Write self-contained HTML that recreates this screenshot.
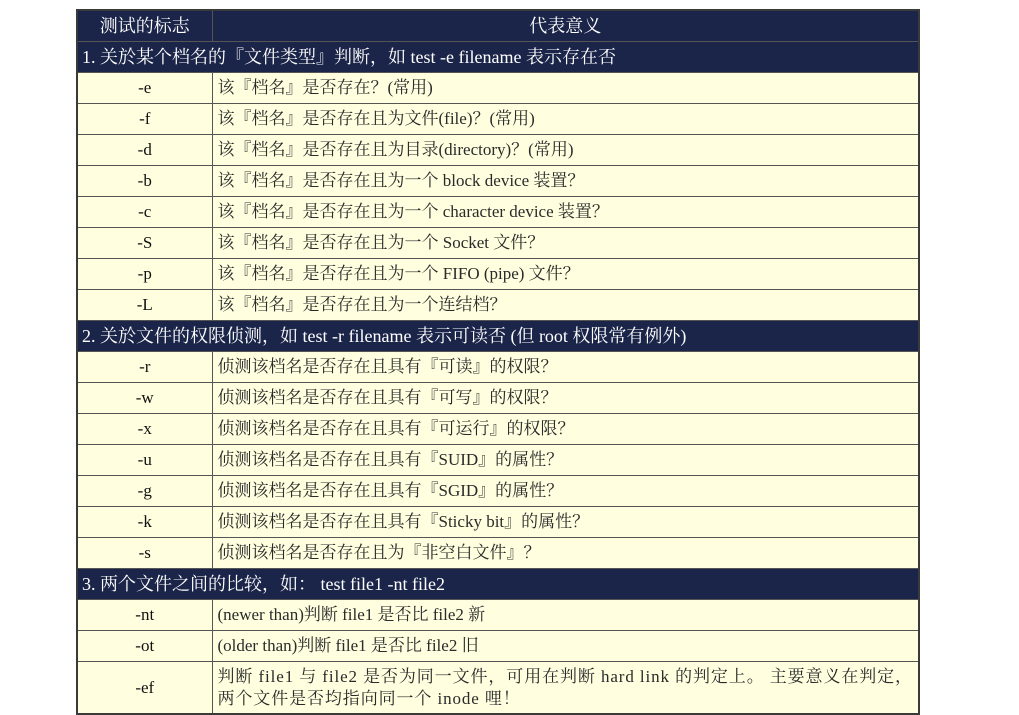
<!DOCTYPE html>
<html><head><meta charset="utf-8"><style>
body{margin:0;background:#fff;width:1019px;height:714px;overflow:hidden;font-family:"Liberation Serif","Noto Serif CJK SC",serif;font-size:17px;}
table{position:absolute;left:76px;top:9px;width:844px;border-collapse:collapse;table-layout:fixed;border:2px solid #3a3a3a;}
td{border:1px solid #555;padding:0 5px;height:30px;background:#fffedf;color:#2a2a2a;white-space:nowrap;line-height:22px;overflow:hidden;}
td.k{text-align:center;color:#111;}
tr.h td{background:#1b2549;color:#fff;}
tr.s td{background:#1b2549;color:#fff;padding-left:4px;font-size:18px;}
tr.h td{text-align:center;font-size:18px;}
.w{letter-spacing:0.9px;}
</style></head><body>
<table>
<colgroup><col style="width:135px"><col></colgroup>
<tr class="h"><td>测试的标志</td><td>代表意义</td></tr>
<tr class="s"><td colspan="2">1. 关於某个档名的『文件类型』判断，如 test -e filename 表示存在否</td></tr>
<tr><td class="k">-e</td><td>该『档名』是否存在？(常用)</td></tr>
<tr><td class="k">-f</td><td>该『档名』是否存在且为文件(file)？(常用)</td></tr>
<tr><td class="k">-d</td><td>该『档名』是否存在且为目录(directory)？(常用)</td></tr>
<tr><td class="k">-b</td><td>该『档名』是否存在且为一个 block device 装置？</td></tr>
<tr><td class="k">-c</td><td>该『档名』是否存在且为一个 character device 装置？</td></tr>
<tr><td class="k">-S</td><td>该『档名』是否存在且为一个 Socket 文件？</td></tr>
<tr><td class="k">-p</td><td>该『档名』是否存在且为一个 FIFO (pipe) 文件？</td></tr>
<tr><td class="k">-L</td><td>该『档名』是否存在且为一个连结档？</td></tr>
<tr class="s"><td colspan="2">2. 关於文件的权限侦测，如 test -r filename 表示可读否 (但 root 权限常有例外)</td></tr>
<tr><td class="k">-r</td><td>侦测该档名是否存在且具有『可读』的权限？</td></tr>
<tr><td class="k">-w</td><td>侦测该档名是否存在且具有『可写』的权限？</td></tr>
<tr><td class="k">-x</td><td>侦测该档名是否存在且具有『可运行』的权限？</td></tr>
<tr><td class="k">-u</td><td>侦测该档名是否存在且具有『SUID』的属性？</td></tr>
<tr><td class="k">-g</td><td>侦测该档名是否存在且具有『SGID』的属性？</td></tr>
<tr><td class="k">-k</td><td>侦测该档名是否存在且具有『Sticky bit』的属性？</td></tr>
<tr><td class="k">-s</td><td>侦测该档名是否存在且为『非空白文件』？</td></tr>
<tr class="s"><td colspan="2">3. 两个文件之间的比较，如： test file1 -nt file2</td></tr>
<tr><td class="k">-nt</td><td>(newer than)判断 file1 是否比 file2 新</td></tr>
<tr><td class="k">-ot</td><td>(older than)判断 file1 是否比 file2 旧</td></tr>
<tr><td class="k" style="height:51px">-ef</td><td class="w">判断 file1 与 file2 是否为同一文件，可用在判断 hard link 的判定上。 主要意义在判定，<br>两个文件是否均指向同一个 inode 哩！</td></tr>
</table>
</body></html>
